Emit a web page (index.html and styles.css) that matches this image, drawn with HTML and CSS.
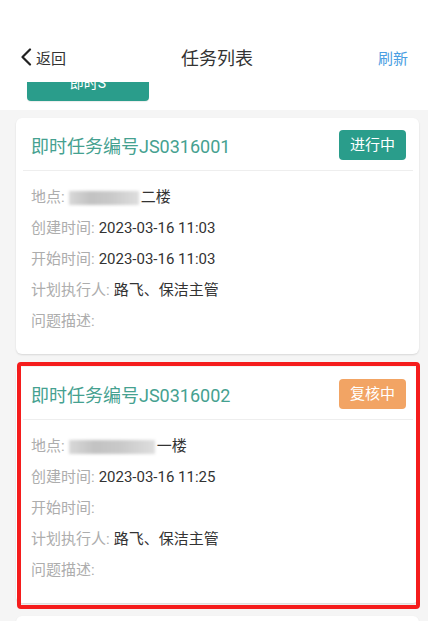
FILE: index.html
```html
<!DOCTYPE html>
<html lang="zh-CN">
<head>
<meta charset="utf-8">
<title>任务列表</title>
<link rel="stylesheet" href="styles.css">
</head>
<body>
<header class="nav">
  <a class="nav-back">
    <svg class="chev" width="12" height="18" viewBox="0 0 12 18"><path d="M10 1.5 L2.5 9 L10 16.5" fill="none" stroke="#222" stroke-width="2.2" stroke-linecap="round" stroke-linejoin="round"/></svg>
    <span>返回</span>
  </a>
  <div class="nav-title">任务列表</div>
  <a class="nav-action">刷新</a>
</header>
<div class="tabs">
  <div class="tab-btn">即时S</div>
</div>
<main class="list">
  <section class="card">
    <div class="card-head">
      <div class="card-title">即时任务编号JS0316001</div>
      <span class="badge badge-green">进行中</span>
    </div>
    <div class="divider"></div>
    <div class="card-body">
      <div class="row"><span class="label">地点:</span><span class="blur b1"></span><span class="value">二楼</span></div>
      <div class="row"><span class="label">创建时间:</span><span class="value">2023-03-16 11:03</span></div>
      <div class="row"><span class="label">开始时间:</span><span class="value">2023-03-16 11:03</span></div>
      <div class="row"><span class="label">计划执行人:</span><span class="value">路飞、保洁主管</span></div>
      <div class="row"><span class="label">问题描述:</span></div>
    </div>
  </section>
  <section class="card card-marked">
    <span class="mark"></span>
    <div class="card-head">
      <div class="card-title">即时任务编号JS0316002</div>
      <span class="badge badge-orange">复核中</span>
    </div>
    <div class="divider"></div>
    <div class="card-body">
      <div class="row"><span class="label">地点:</span><span class="blur b2"></span><span class="value">一楼</span></div>
      <div class="row"><span class="label">创建时间:</span><span class="value">2023-03-16 11:25</span></div>
      <div class="row"><span class="label">开始时间:</span></div>
      <div class="row"><span class="label">计划执行人:</span><span class="value">路飞、保洁主管</span></div>
      <div class="row"><span class="label">问题描述:</span></div>
    </div>
  </section>
  <section class="card card-empty"></section>
</main>
</body>
</html>
```
FILE: styles.css
```css
html, body {
  margin: 0;
  padding: 0;
  overflow: hidden;
  background: #fff;
  font-family: Roboto, "Noto Sans CJK SC", sans-serif;
}

.nav {
  height: 26px;
  padding: 44px 20px 12px 20px;
  display: flex;
  align-items: center;
  justify-content: space-between;
  position: relative;
}

.nav-back {
  display: flex;
  align-items: center;
  gap: 4px;
  font-size: 15px;
  color: #333;
}

.chev {
  display: block;
}

.nav-title {
  position: absolute;
  left: 0;
  right: 0;
  text-align: center;
  font-size: 18px;
  color: #333;
  pointer-events: none;
  padding-left: 6px;
}

.nav-action {
  font-size: 15px;
  color: #4a9ee2;
}

.tabs {
  height: 28px;
  overflow: hidden;
  padding-left: 27px;
}

.tab-btn {
  width: 122px;
  height: 36px;
  margin-top: -17px;
  background: #2a9d8b;
  border-radius: 4px;
  color: #fff;
  font-size: 14px;
  text-align: center;
  line-height: 36px;
  box-shadow: 0 1px 1px rgba(0, 0, 0, 0.08);
}

.list {
  background: #f5f5f5;
  padding: 8px 9px 0 16px;
  min-height: 600px;
}

.card {
  background: #fff;
  border-radius: 6px;
  box-shadow: 0 1px 2px rgba(0, 0, 0, 0.12);
  margin-bottom: 13px;
}

.card-empty {
  height: 60px;
}

.card-marked {
  position: relative;
}

.mark {
  position: absolute;
  top: -5px;
  bottom: -6px;
  left: 1px;
  right: -1px;
  border: 4px solid #f51c1c;
  border-radius: 4px;
  pointer-events: none;
}

.card-head {
  padding: 12px 13px 10px 15px;
  display: flex;
  align-items: center;
  justify-content: space-between;
}

.card-title {
  font-size: 18px;
  color: #45a190;
}

.badge {
  width: 67px;
  height: 30px;
  line-height: 30px;
  text-align: center;
  border-radius: 4px;
  color: #fff;
  font-size: 15px;
}

.badge-green {
  background: #2a9d8b;
}

.badge-orange {
  background: #f2a464;
}

.divider {
  height: 1px;
  background: #eeeeee;
  margin: 0 6px 0 7px;
}

.card-body {
  padding: 11px 15px 17px 15px;
}

.row {
  height: 31px;
  line-height: 31px;
  font-size: 15px;
  display: flex;
  align-items: center;
  white-space: nowrap;
}

.label {
  color: #adadad;
  margin-right: 4px;
}

.value {
  color: #333;
}

.blur {
  display: inline-block;
  height: 14px;
  background: linear-gradient(90deg, #d8d8d8, #c2c2c2 30%, #c9c9c9 60%, #dedede);
  filter: blur(1.5px);
  margin-right: 2px;
}

.b1 {
  width: 70px;
}

.b2 {
  width: 86px;
}
```
